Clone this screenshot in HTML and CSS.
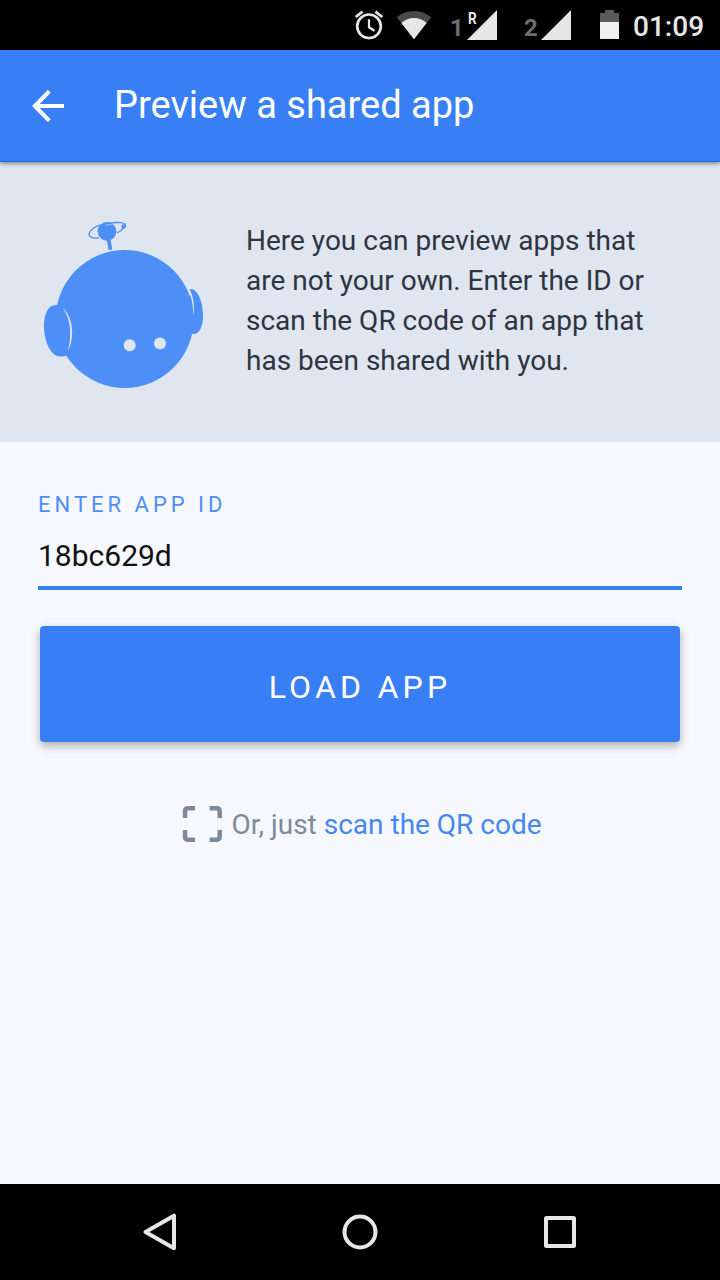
FILE: index.html
```html
<!DOCTYPE html>
<html lang="en">
<head>
<meta charset="utf-8">
<title>Preview a shared app</title>
<link rel="stylesheet" href="styles.css">
</head>
<body>
<div class="status-bar">
  <svg class="alarm" width="30" height="30" viewBox="0 0 30 30" fill="none" stroke="#e6e6e6">
    <circle cx="15" cy="16.300" r="11.800" stroke-width="2.700"/>
    <path d="M15 9.300v8l5.500 3.500" stroke-width="2.200"/>
    <path d="M1.700 7L8.600 1.600M21.400 1.600L28.300 7" stroke-width="2.800"/>
  </svg>
  <svg class="wifi" width="36" height="30" viewBox="0 0 36 30">
    <path d="M18 29.200L.8 7.200Q8.500 1 18 1t17.200 6.200z" fill="#4a4a4a"/>
    <path d="M18 29.200L5.400 13Q11 8 18 8t12.600 5z" fill="#e6e6e6"/>
  </svg>
  <div class="sim sim-one">
    <span class="sim-number">1</span>
    <svg width="30" height="30" viewBox="0 0 30 30"><path d="M30 0v30H0z" fill="#e6e6e6"/></svg>
    <span class="roaming">R</span>
  </div>
  <div class="sim sim-two">
    <span class="sim-number">2</span>
    <svg width="30" height="30" viewBox="0 0 30 30"><path d="M30 0v30H0z" fill="#e6e6e6"/></svg>
  </div>
  <svg class="battery" width="19" height="29" viewBox="0 0 19 29">
    <path d="M0 3h5V0h9v3h5v10H0z" fill="#5a5a5a"/>
    <path d="M0 12h19v17H0z" fill="#f0f0f0"/>
  </svg>
  <span class="clock">01:09</span>
</div>
<header class="app-bar">
  <svg class="back" width="32" height="32" viewBox="0 0 32 32" fill="none" stroke="#fff" stroke-width="4">
    <path d="M17.300 1.300L2.800 16l14.500 14.700M3 16h29"/>
  </svg>
  <h1 class="title">Preview a shared app</h1>
</header>
<main class="content">
  <section class="intro">
    <svg class="robot" width="160" height="168" viewBox="0 0 160 168">
      <g fill="#4e8ff7">
        <path d="M62.800 19.500h3.800l1.700 10-3.800.7z"/>
        <circle cx="80.700" cy="99" r="69"/>
        <path d="M13 85C4 84 0 94 0 106c0 16 7 28 13 30q5 1 10-.5c5-4 6-22 3-32Q22 85 13 85z"/>
        <path d="M146 69c7-1 13 12 13 27 0 11-4 18-9 18h-4z"/>
        <circle cx="63" cy="11.300" r="9.400"/>
        <circle cx="79.600" cy="6.500" r="2.300"/>
      </g>
      <path d="M18.200 87.500C29.500 97 31 118 23.700 131.500 28.200 116 27 98 18.200 87.500z" fill="#dfe6f0"/>
      <path d="M145.500 69C150 78 150.500 87 149.600 96 149 85 147.500 76 143.700 69z" fill="#dfe6f0"/>
      <circle cx="85.700" cy="125.300" r="6" fill="#dfe6f0"/>
      <circle cx="116" cy="123.500" r="6" fill="#dfe6f0"/>
      <path d="M55 18C40 20 43 7.500 59 4.300 72 1.300 86 2 80 7.500Q77.500 10.500 73 13" fill="none" stroke="#4e8ff7" stroke-width="1.300"/>
      <path d="M61 5.200q8-1.600 13-.9" fill="none" stroke="#cbdcf5" stroke-width=".6"/>
    </svg>
    <p class="intro-text">Here you can preview apps that<br>are not your own. Enter the ID or<br>scan the QR code of an app that<br>has been shared with you.</p>
  </section>
  <section class="form">
    <label class="field-label" for="app-id">ENTER APP ID</label>
    <input class="field" id="app-id" type="text" value="18bc629d">
    <button class="load" type="button">LOAD APP</button>
    <div class="scan">
      <svg width="40" height="36" viewBox="0 0 40 36" fill="none" stroke="#7d8a9c" stroke-width="4.500">
        <path d="M3 12V5.500q0-3.200 3.200-3.200H13M27.700 2.300h6.800q3.200 0 3.200 3.200V12M37.700 24v6.500q0 3.200-3.200 3.200h-6.800M13 33.700H6.200q-3.200 0-3.200-3.200V24"/>
      </svg>
      <span class="scan-text">Or, just <a class="scan-link">scan the QR code</a></span>
    </div>
  </section>
</main>
<nav class="nav-bar">
  <svg width="40" height="40" viewBox="0 0 40 40"><path d="M5.500 20L34 3.700v32.600z"/></svg>
  <svg width="40" height="40" viewBox="0 0 40 40"><circle cx="20" cy="20" r="15.500"/></svg>
  <svg width="40" height="40" viewBox="0 0 40 40"><rect x="6" y="6" width="28" height="28" rx=".5"/></svg>
</nav>
</body>
</html>
```
FILE: styles.css
```css
* { box-sizing: border-box; }
body {
  margin: 0;
  width: 720px;
  height: 1280px;
  display: flex;
  flex-direction: column;
  overflow: hidden;
  font-family: Roboto, sans-serif;
  background: #f6f8fd;
}
svg { display: block; flex: none; }
.status-bar {
  height: 50px;
  flex: none;
  display: flex;
  align-items: flex-start;
  justify-content: flex-end;
  padding: 10px 16px 0 0;
  background: #000;
}
.wifi { margin-left: 12px; }
.sim { position: relative; display: flex; height: 30px; }
.sim-one { width: 47px; margin-left: 18px; }
.sim-two { width: 47px; margin-left: 27px; }
.sim-number {
  width: 17px;
  font-size: 24px;
  line-height: 36px;
  font-weight: 700;
  color: #6e6e6e;
}
.roaming {
  position: absolute;
  left: 18px;
  top: 1px;
  font-size: 16px;
  line-height: 16px;
  font-weight: 700;
  color: #e6e6e6;
  transform: scaleX(.85);
  transform-origin: left;
}
.battery { margin-left: 29px; }
.clock {
  width: 71px;
  margin-left: 14px;
  font-size: 28px;
  line-height: 34px;
  font-weight: 500;
  color: #e6e6e6;
  white-space: nowrap;
}
.app-bar {
  position: relative;
  height: 112px;
  flex: none;
  display: flex;
  align-items: center;
  padding-left: 32px;
  background: #387ff5;
  border-bottom: 1px solid #1b66df;
  box-shadow: 0 1px 5px rgba(0, 0, 0, .5);
}
.title {
  margin: 0 0 1px 50px;
  font-size: 38px;
  line-height: 48px;
  font-weight: 400;
  color: #fff;
  white-space: nowrap;
}
.content { flex: 1; }
.intro {
  height: 280px;
  display: flex;
  align-items: flex-start;
  padding: 58px 0 0 44px;
  background: #dfe6f0;
}
.intro-text {
  margin: 1px 0 0 42px;
  font-size: 28px;
  line-height: 40px;
  color: #2e3440;
  white-space: nowrap;
}
.form {
  display: flex;
  flex-direction: column;
  padding: 49px 38px 0;
}
.field-label {
  font-size: 22px;
  line-height: 28px;
  letter-spacing: 4px;
  color: #4e8ff7;
}
.field {
  height: 71px;
  padding: 5px 0 0;
  border: 0;
  border-bottom: 4px solid #387ff5;
  outline: 0;
  background: transparent;
  font: 30px Roboto, sans-serif;
  color: #111;
}
.load {
  height: 116px;
  margin: 36px 2px 0;
  padding: 6px 0 0;
  border: 0;
  border-radius: 4px;
  background: #387ff5;
  box-shadow: 0 4px 10px rgba(0, 0, 0, .3);
  font: 32px Roboto, sans-serif;
  letter-spacing: 4.2px;
  color: #fff;
}
.scan {
  display: flex;
  align-items: center;
  margin: 62px 0 0 144px;
}
.scan-text {
  margin: 1px 0 -1px 9.5px;
  font-size: 28px;
  line-height: 40px;
  color: #7d8a9c;
  white-space: nowrap;
}
.scan-link { color: #4388f5; }
.nav-bar {
  height: 96px;
  flex: none;
  display: flex;
  align-items: center;
  justify-content: space-between;
  padding: 0 140px;
  background: #000;
  fill: none;
  stroke: #e6e6e6;
  stroke-width: 4;
  stroke-linejoin: round;
}
```
